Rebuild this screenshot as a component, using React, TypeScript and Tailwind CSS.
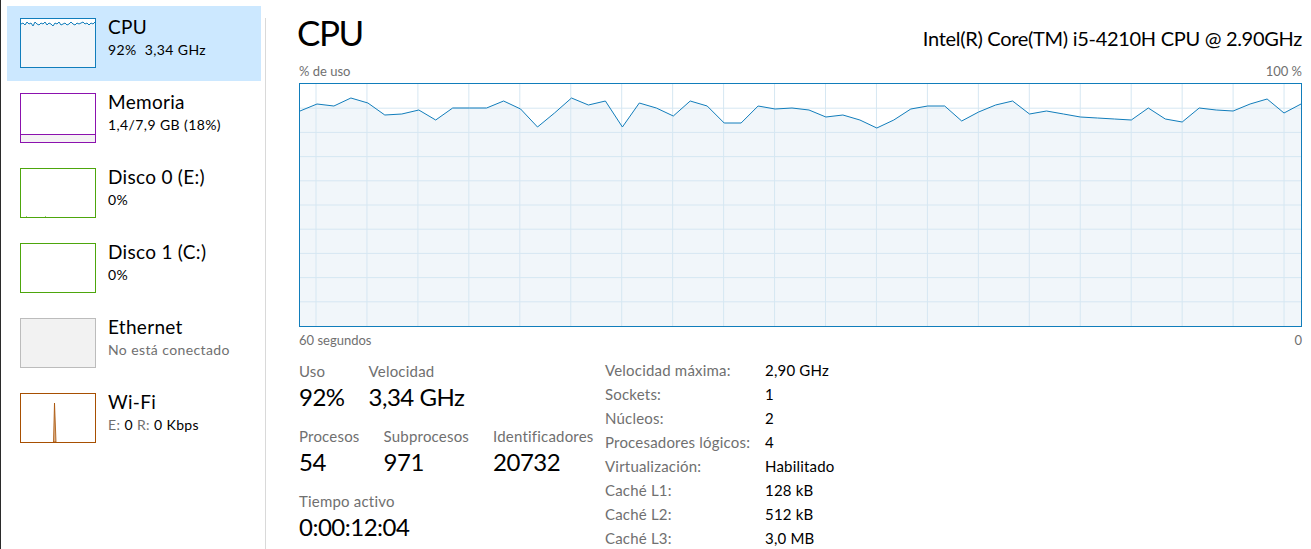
const usage = [
  111, 104, 106, 98, 103, 115, 114, 110, 120, 108, 108, 108, 101, 109, 127, 113, 98, 105, 101, 127,
  103, 108, 116, 101, 106, 123, 123, 106, 109, 108, 110, 117, 115, 120, 128, 120, 109, 106, 106, 121,
  112, 105, 101, 114, 111, 114, 117, 118, 119, 120, 108, 119, 122, 108, 110, 111, 104, 99, 113, 104,
];

const thumbJitter = [5, 4, 6, 3, 5, 4, 7, 3, 5, 6, 4, 5, 3, 6, 4, 5, 7, 4, 5, 3, 6, 5, 4, 6, 5, 3, 5, 6, 4, 5, 4, 3, 5, 4, 6, 4, 5, 3];

function MainChart() {
  const W = 1001;
  const H = 242;
  const pts = usage.map((y, i) => `${((i * W) / 59).toFixed(1)},${y - 84}`).join(" ");
  const area = `0,${H} ${pts} ${W},${H}`;
  const vlines = Array.from({ length: 20 }, (_, k) => 16 + k * 50.95);
  const hlines = Array.from({ length: 9 }, (_, k) => (k + 1) * 24.2);
  return (
    <div className="border border-[#117dbb] h-[244px] w-[1003px]">
      <svg width={W} height={H} viewBox={`0 0 ${W} ${H}`} className="block">
        <polygon points={area} fill="#f1f6fa" />
        {vlines.map((x) => (
          <line key={x} x1={x} y1={0} x2={x} y2={H} stroke="#d6e7f2" strokeWidth={1} />
        ))}
        {hlines.map((y) => (
          <line key={y} x1={0} y1={y} x2={W} y2={y} stroke="#d6e7f2" strokeWidth={1} />
        ))}
        <polyline points={pts} fill="none" stroke="#117dbb" strokeWidth={1} />
      </svg>
    </div>
  );
}

function CpuThumb() {
  const pts = thumbJitter.map((y, i) => `${((i * 74) / (thumbJitter.length - 1)).toFixed(1)},${y}`).join(" ");
  return (
    <svg width={74} height={48} className="block">
      <polygon points={`0,48 ${pts} 74,48`} fill="#f1f6fa" />
      <polyline points={pts} fill="none" stroke="#117dbb" strokeWidth={1} />
    </svg>
  );
}

function Thumb({ kind }: { kind: string }) {
  if (kind === "cpu")
    return (
      <div className="w-[76px] h-[50px] border border-[#117dbb] bg-white">
        <CpuThumb />
      </div>
    );
  if (kind === "mem")
    return (
      <div className="w-[76px] h-[50px] border border-[#8b12ae] bg-white flex flex-col justify-end">
        <div className="h-[8px] border-t border-[#8b12ae] bg-[#f4f2f4]" />
      </div>
    );
  if (kind === "disk0")
    return (
      <div className="w-[76px] h-[50px] border border-[#4da60c] bg-white relative">
        <div className="absolute bottom-0 left-[5px] w-px h-px bg-[#9bc87a]" />
        <div className="absolute bottom-0 left-[24px] w-px h-px bg-[#9bc87a]" />
      </div>
    );
  if (kind === "disk")
    return <div className="w-[76px] h-[50px] border border-[#4da60c] bg-white" />;
  if (kind === "eth")
    return <div className="w-[76px] h-[50px] border border-[#bcbcbc] bg-[#f2f2f2]" />;
  return (
    <div className="w-[76px] h-[50px] border border-[#a74f01] bg-white">
      <svg width={74} height={48} className="block">
        <polygon points="32.5,48 33.5,9 35,48" fill="#dcb48e" stroke="#a74f01" strokeWidth={0.8} />
      </svg>
    </div>
  );
}

function SideItem({
  kind,
  title,
  children,
  active,
}: {
  kind: string;
  title: string;
  children: React.ReactNode;
  active?: boolean;
}) {
  return (
    <div className={`h-[75px] flex items-start pl-[13px] pt-[12px] ${active ? "bg-[#cce8ff]" : ""}`}>
      <Thumb kind={kind} />
      <div className="ml-[12px] -mt-[3px]">
        <div className="text-[19px] leading-[24px] tracking-[0.3px] text-black">{title}</div>
        <div className="text-[14px] leading-[20px] tracking-[0.4px] mt-[1px]">{children}</div>
      </div>
    </div>
  );
}

function Stat({ label, value }: { label: string; value: string }) {
  return (
    <div className="flex flex-col">
      <span className="text-[15px] leading-[20px] tracking-[0.2px] text-[#707070]">{label}</span>
      <span className="text-[24px] leading-[32px] tracking-[-0.5px] text-black">{value}</span>
    </div>
  );
}

export default function App() {
  const specs = [
    ["Velocidad máxima:", "2,90 GHz"],
    ["Sockets:", "1"],
    ["Núcleos:", "2"],
    ["Procesadores lógicos:", "4"],
    ["Virtualización:", "Habilitado"],
    ["Caché L1:", "128 kB"],
    ["Caché L2:", "512 kB"],
    ["Caché L3:", "3,0 MB"],
  ];

  return (
    <div
      className="w-[1311px] h-[549px] bg-white flex overflow-hidden border-l border-[#2b2b2b]"
      style={{ fontFamily: "Lato, 'Open Sans', sans-serif" }}
    >
      {/* sidebar */}
      <div className="w-[264px] shrink-0 flex">
        <div className="w-[254px] ml-[6px] pt-[6px]">
          <SideItem kind="cpu" title="CPU" active>
            <span className="text-black">92%&nbsp; 3,34 GHz</span>
          </SideItem>
          <SideItem kind="mem" title="Memoria">
            <span className="text-black">1,4/7,9 GB (18%)</span>
          </SideItem>
          <SideItem kind="disk0" title="Disco 0 (E:)">
            <span className="text-black">0%</span>
          </SideItem>
          <SideItem kind="disk" title="Disco 1 (C:)">
            <span className="text-black">0%</span>
          </SideItem>
          <SideItem kind="eth" title="Ethernet">
            <span className="text-[#707070]">No está conectado</span>
          </SideItem>
          <SideItem kind="wifi" title="Wi-Fi">
            <span className="text-[#707070]">E: </span>
            <span className="text-black">0 </span>
            <span className="text-[#707070]">R: </span>
            <span className="text-black">0 Kbps</span>
          </SideItem>
        </div>
      </div>
      <div className="w-px bg-[#d9d9d9] mt-[18px] shrink-0" />

      {/* main */}
      <div className="flex-1 pl-[33px] pr-[9px]">
        <div className="flex items-baseline justify-between h-[60px] pt-[10px] -ml-[2px]">
          <span className="text-[35px] leading-[44px] tracking-[-1.5px] text-black">CPU</span>
          <span className="text-[20px] leading-[26px] tracking-[-0.3px] text-black">
            Intel(R) Core(TM) i5-4210H CPU @ 2.90GHz
          </span>
        </div>
        <div className="flex justify-between text-[13px] leading-[23px] text-[#707070]">
          <span>% de uso</span>
          <span>100 %</span>
        </div>
        <MainChart />
        <div className="flex justify-between text-[13px] leading-[26px] text-[#707070]">
          <span>60 segundos</span>
          <span>0</span>
        </div>

        <div className="flex mt-[8px]">
          <div className="w-[306px] flex flex-col gap-[13px]">
            <div className="flex gap-6">
              <Stat label="Uso" value="92%" />
              <Stat label="Velocidad" value="3,34 GHz" />
            </div>
            <div className="flex gap-6">
              <Stat label="Procesos" value="54" />
              <Stat label="Subprocesos" value="971" />
              <Stat label="Identificadores" value="20732" />
            </div>
            <div className="flex gap-6">
              <Stat label="Tiempo activo" value="0:00:12:04" />
            </div>
          </div>
          <div className="flex flex-col -mt-[3px]">
            {specs.map(([k, v]) => (
              <div key={k} className="flex text-[15px] leading-[24px] tracking-[0.2px]">
                <span className="w-[160px] text-[#707070]">{k}</span>
                <span className="text-black">{v}</span>
              </div>
            ))}
          </div>
        </div>
      </div>
    </div>
  );
}
